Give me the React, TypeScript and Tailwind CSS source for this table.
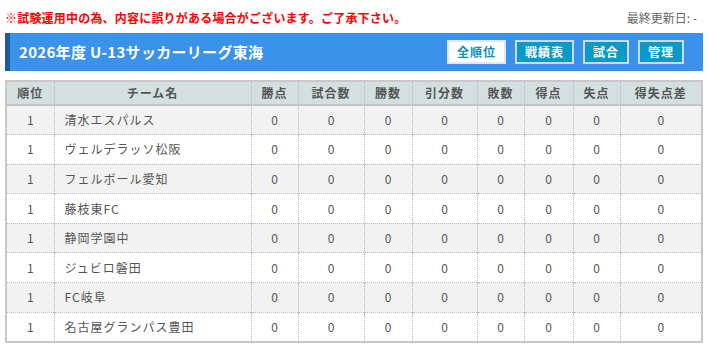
import React from "react";

const teams = [
  "清水エスパルス",
  "ヴェルデラッソ松阪",
  "フェルボール愛知",
  "藤枝東FC",
  "静岡学園中",
  "ジュビロ磐田",
  "FC岐阜",
  "名古屋グランパス豊田",
];

const cols = [
  { label: "順位", w: "w-[48px]" },
  { label: "チーム名", w: "w-[197px]" },
  { label: "勝点", w: "w-[47px]" },
  { label: "試合数", w: "w-[66px]" },
  { label: "勝数", w: "w-[48px]" },
  { label: "引分数", w: "w-[65px]" },
  { label: "敗数", w: "w-[47px]" },
  { label: "得点", w: "w-[49px]" },
  { label: "失点", w: "w-[47px]" },
  { label: "得失点差", w: "" },
];

const App = () => {
  return (
    <div className="w-[709px] h-[349px] bg-white px-[5px] overflow-hidden font-['Noto_Sans_CJK_JP',sans-serif]">
      <div className="flex items-center justify-between h-[33px] pt-[2px] pr-[7px]">
        <p className="text-[12px] font-bold text-[#ff0000] tracking-[0.2px]">
          ※試験運用中の為、内容に誤りがある場合がございます。ご了承下さい。
        </p>
        <p className="text-[12px] text-[#666]">最終更新日: -</p>
      </div>

      <div className="flex items-center justify-between h-[38px] w-[698px] bg-[#3a92ea] border-l-[5px] border-[#1b5b9c] pl-[9px] pr-[19px]">
        <h1 className="text-[15px] font-bold text-white tracking-[0.3px]">2026年度 U-13サッカーリーグ東海</h1>
        <div className="flex gap-[9px]">
          <button className="h-[24px] w-[59px] bg-white border-2 border-[#dde8f0] text-[#0a8fc4] text-[12px] font-bold tracking-[1px]">全順位</button>
          <button className="h-[24px] w-[59px] bg-[#0b99c9] border-2 border-[#cfd9df] text-white text-[12px] font-bold tracking-[1px]">戦績表</button>
          <button className="h-[24px] w-[46px] bg-[#0b99c9] border-2 border-[#cfd9df] text-white text-[12px] font-bold tracking-[1px]">試合</button>
          <button className="h-[24px] w-[46px] bg-[#0b99c9] border-2 border-[#cfd9df] text-white text-[12px] font-bold tracking-[1px]">管理</button>
        </div>
      </div>

      <table className="mt-[9px] w-[698px] border-collapse border-2 border-[#c8c8c8] text-[12px] text-[#555] table-fixed">
        <thead>
          <tr className="h-[24px] bg-[#d4e0e0] border-b-2 border-[#c4c4c4]">
            {cols.map((c, i) => (
              <th
                key={i}
                className={`${c.w} font-bold text-center tracking-[1px] ${i < cols.length - 1 ? "border-r border-dotted border-[#bbb]" : ""}`}
              >
                {c.label}
              </th>
            ))}
          </tr>
        </thead>
        <tbody>
          {teams.map((t, r) => (
            <tr
              key={r}
              className={`h-[29.6px] border-b border-dotted border-[#bbb] ${r % 2 === 0 ? "bg-[#f2f2f2]" : "bg-white"}`}
            >
              <td className="text-center border-r border-dotted border-[#bbb]">1</td>
              <td className="pl-[10px] text-left border-r border-dotted border-[#bbb] tracking-[1px]">{t}</td>
              {Array(8).fill(null).map((_, i) => (
                <td
                  key={i}
                  className={`text-center ${i < 7 ? "border-r border-dotted border-[#bbb]" : ""}`}
                >
                  0
                </td>
              ))}
            </tr>
          ))}
        </tbody>
      </table>
    </div>
  );
};

export default App;
